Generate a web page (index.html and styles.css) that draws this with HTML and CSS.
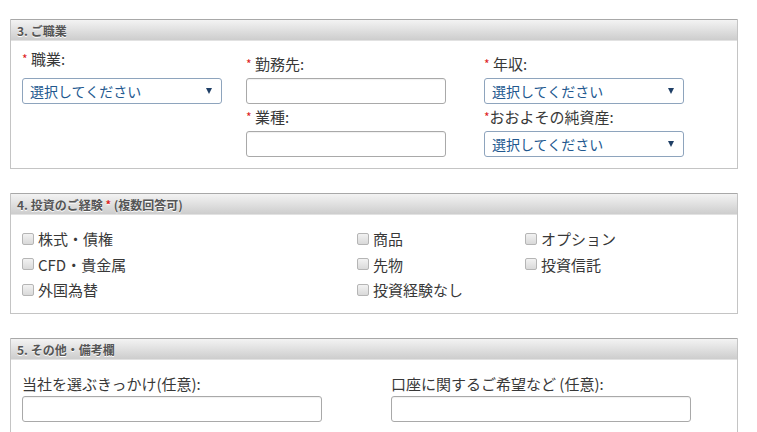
FILE: index.html
```html
<!DOCTYPE html>
<html lang="ja">
<head>
<meta charset="utf-8">
<link rel="stylesheet" href="styles.css">
</head>
<body>
<div class="page">
  <section class="box box-job">
    <div class="box-head">3. ご職業</div>
    <div class="job-grid">
      <div class="col col-first">
        <div class="field">
          <label class="lbl"><span class="req">*</span> 職業:</label>
          <div class="sel"><span>選択してください</span><span class="arrow"></span></div>
        </div>
      </div>
      <div class="col">
        <div class="field">
          <label class="lbl"><span class="req">*</span> 勤務先:</label>
          <div class="inp"></div>
        </div>
        <div class="field">
          <label class="lbl"><span class="req">*</span> 業種:</label>
          <div class="inp"></div>
        </div>
      </div>
      <div class="col">
        <div class="field">
          <label class="lbl"><span class="req">*</span> 年収:</label>
          <div class="sel"><span>選択してください</span><span class="arrow"></span></div>
        </div>
        <div class="field">
          <label class="lbl"><span class="req">*</span>おおよその純資産:</label>
          <div class="sel"><span>選択してください</span><span class="arrow"></span></div>
        </div>
      </div>
    </div>
  </section>

  <section class="box box-exp">
    <div class="box-head">4. 投資のご経験 <span class="req">*</span> (複数回答可)</div>
    <div class="chk-grid">
      <label class="chk"><span class="cb"></span>株式・債権</label>
      <label class="chk"><span class="cb"></span>商品</label>
      <label class="chk"><span class="cb"></span>オプション</label>
      <label class="chk"><span class="cb"></span>CFD・貴金属</label>
      <label class="chk"><span class="cb"></span>先物</label>
      <label class="chk"><span class="cb"></span>投資信託</label>
      <label class="chk"><span class="cb"></span>外国為替</label>
      <label class="chk"><span class="cb"></span>投資経験なし</label>
    </div>
  </section>

  <section class="box box-other">
    <div class="box-head">5. その他・備考欄</div>
    <div class="other-grid">
      <div class="field">
        <label class="lbl">当社を選ぶきっかけ(任意):</label>
        <div class="inp inp-wide"></div>
      </div>
      <div class="field">
        <label class="lbl">口座に関するご希望など (任意):</label>
        <div class="inp inp-wide"></div>
      </div>
    </div>
  </section>
</div>
</body>
</html>
```

FILE: styles.css
```css
* { box-sizing: border-box; }
html, body { margin: 0; padding: 0; background: #fff; }
body {
  font-family: "Noto Sans CJK JP", "Liberation Sans", sans-serif;
  color: #383838;
  font-size: 15px;
}
.page {
  padding: 19px 0 0 10px;
  width: 738px;
}
.box {
  border: 1px solid #c4c4c4;
  border-top: none;
  background: #fff;
  margin-bottom: 24px;
}
.box-head {
  height: 22px;
  line-height: 21px;
  border-top: 1px solid #a8a8a8;
  border-bottom: 1px solid #e2e2e2;
  background: linear-gradient(to bottom, #f3f3f3 0%, #e4e4e4 40%, #cdcdcd 100%);
  padding-left: 6px;
  font-size: 12px;
  font-weight: 700;
  color: #555;
  text-shadow: 0 1px 0 #fff;
}
.box-head .req { font-size: 11px; }
.req {
  color: #d22;
  font-size: 12px;
  position: relative;
  top: -1px;
}

/* section 3 */
.job-grid {
  display: grid;
  grid-template-columns: 224px 238px 1fr;
  padding: 13px 0 11px 11px;
}
.field { display: flex; flex-direction: column; }
.col { display: flex; flex-direction: column; gap: 3px; }
.lbl {
  line-height: 20px;
  height: 20px;
  margin-bottom: 4px;
  white-space: nowrap;
}
.col-first .lbl { margin-top: -5px; margin-bottom: 9px; }
.sel {
  width: 200px;
  height: 26px;
  border: 1px solid #8ea4bd;
  border-radius: 3px;
  background: #fff;
  display: flex;
  align-items: center;
  justify-content: space-between;
  padding: 0 9px 0 7px;
  color: #22588f;
  font-size: 14px;
}
.arrow {
  width: 0; height: 0;
  border-left: 3px solid transparent;
  border-right: 3px solid transparent;
  border-top: 6px solid #1f3f66;
}
.inp {
  width: 200px;
  height: 26px;
  border: 1px solid #a9a9a9;
  border-radius: 3px;
  background: #fff;
  box-shadow: inset 0 1px 1px rgba(0,0,0,0.06);
}
.inp-wide { width: 300px; height: 26px; }

/* section 4 */
.chk-grid {
  display: grid;
  grid-template-columns: 335px 168px 1fr;
  grid-auto-rows: 25.5px;
  padding: 11px 0 10px 11px;
}
.chk {
  display: flex;
  align-items: center;
  gap: 4px;
  white-space: nowrap;
}
.cb {
  width: 12px;
  height: 12px;
  border: 1px solid #b5b5b5;
  border-radius: 2px;
  background: linear-gradient(to bottom, #f2f2f2, #d9d9d9);
  flex: none;
}

/* section 5 */
.other-grid {
  display: grid;
  grid-template-columns: 369px 1fr;
  padding: 14px 0 30px 11px;
}
.other-grid .lbl { margin-bottom: 2px; }
```
